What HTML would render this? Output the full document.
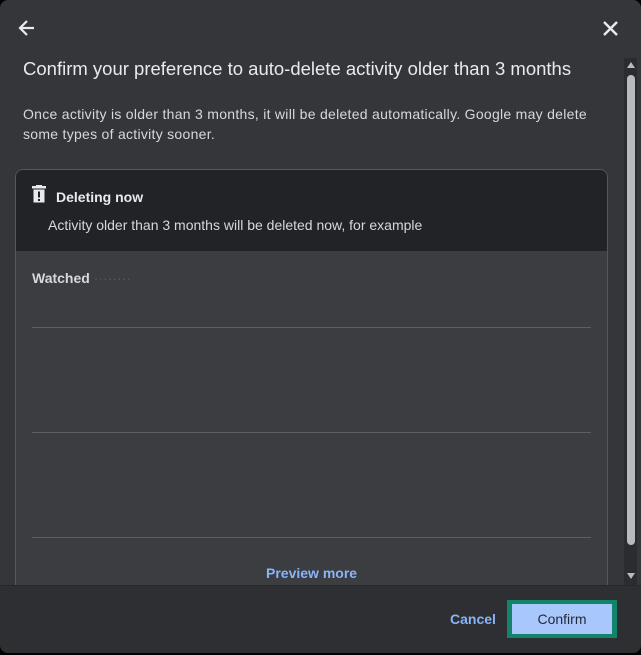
<!DOCTYPE html>
<html><head><style>
html,body{margin:0;padding:0;background:#000;width:641px;height:655px;overflow:hidden;font-family:"Liberation Sans",sans-serif}
.dlg{position:absolute;left:0;top:0;width:641px;height:653px;background:#35363a;border-radius:8px;overflow:hidden}
.t{position:absolute;color:#e8eaed}
.card{position:absolute;left:15px;top:169px;width:591px;height:430px;border:1px solid #55575b;border-radius:8px;background:#3b3d40;overflow:hidden}
.ch{position:absolute;left:0;top:0;width:100%;height:81px;background:#222326}
.line{position:absolute;left:16px;width:559px;height:1px;background:#5c5e62}
.foot{position:absolute;left:0;top:585px;width:641px;height:70px;background:#2e2f32;border-top:1px solid #26272a}
.sb{position:absolute;left:624px;top:58px;width:13px;height:527px;background:#2b2c2f}
.th{position:absolute;left:627px;top:75px;width:8px;height:470px;background:#b8babd;border-radius:4px}
</style></head><body>
<div class="dlg">
<svg style="position:absolute;left:17px;top:18px" width="20" height="20" viewBox="0 0 20 20"><path d="M17 10H4M10 3L3 10l7 7" stroke="#e8eaed" stroke-width="2.2" fill="none"/></svg>
<svg style="position:absolute;left:602px;top:20px" width="17" height="17" viewBox="0 0 17 17"><path d="M2 2L15 15M15 2L2 15" stroke="#e8eaed" stroke-width="2.4"/></svg>
<div class="t" style="left:23px;top:58px;font-size:18.5px">Confirm your preference to auto-delete activity older than 3 months</div>
<div class="t" style="left:23px;top:104px;font-size:14px;line-height:20px;color:#d6d8db;width:585px;letter-spacing:0.28px">Once activity is older than 3 months, it will be deleted automatically. Google may delete<br>some types of activity sooner.</div>
<div class="card">
<div class="ch"></div>
<svg style="position:absolute;left:16px;top:15px" width="14" height="18" viewBox="0 0 14 18"><rect x="0" y="1" width="14" height="2.5" fill="#e8eaed"/><rect x="4" y="0" width="6" height="2" fill="#e8eaed"/><rect x="1.5" y="4.5" width="11" height="13" fill="#e8eaed"/><rect x="6" y="6.5" width="2" height="6" fill="#222326"/><rect x="6" y="14" width="2" height="2" fill="#222326"/></svg>
<div class="t" style="left:40px;top:19px;font-size:14px;font-weight:bold">Deleting now</div>
<div class="t" style="left:32px;top:47px;font-size:14px;color:#d6d8db">Activity older than 3 months will be deleted now, for example</div>
<div class="t" style="left:16px;top:100px;font-size:14px;font-weight:bold;color:#d6d8db">Watched <span style="color:#55585c;font-weight:normal">········</span></div>
<div class="line" style="top:157px"></div>
<div class="line" style="top:262px"></div>
<div class="line" style="top:367px"></div>
<div class="t" style="left:250px;top:395px;font-size:14px;font-weight:bold;color:#8ab4f8">Preview more</div>
</div>
<div class="sb"></div><div class="th"></div>
<svg style="position:absolute;left:626px;top:61px" width="10" height="8"><path d="M1 7L5 1L9 7Z" fill="#b8babd"/></svg>
<svg style="position:absolute;left:626px;top:572px" width="10" height="8"><path d="M1 1L5 7L9 1Z" fill="#b8babd"/></svg>
<div class="foot"></div>
<div class="t" style="left:450px;top:611px;font-size:14px;font-weight:bold;color:#8ab4f8">Cancel</div>
<div style="position:absolute;left:507px;top:600px;width:110px;height:38px;background:#128469"></div>
<div style="position:absolute;left:512px;top:604px;width:100px;height:30px;background:#a8c7fa;color:#1f2a3a;font-size:14px;text-align:center;line-height:30px">Confirm</div>
</div>
</body></html>
